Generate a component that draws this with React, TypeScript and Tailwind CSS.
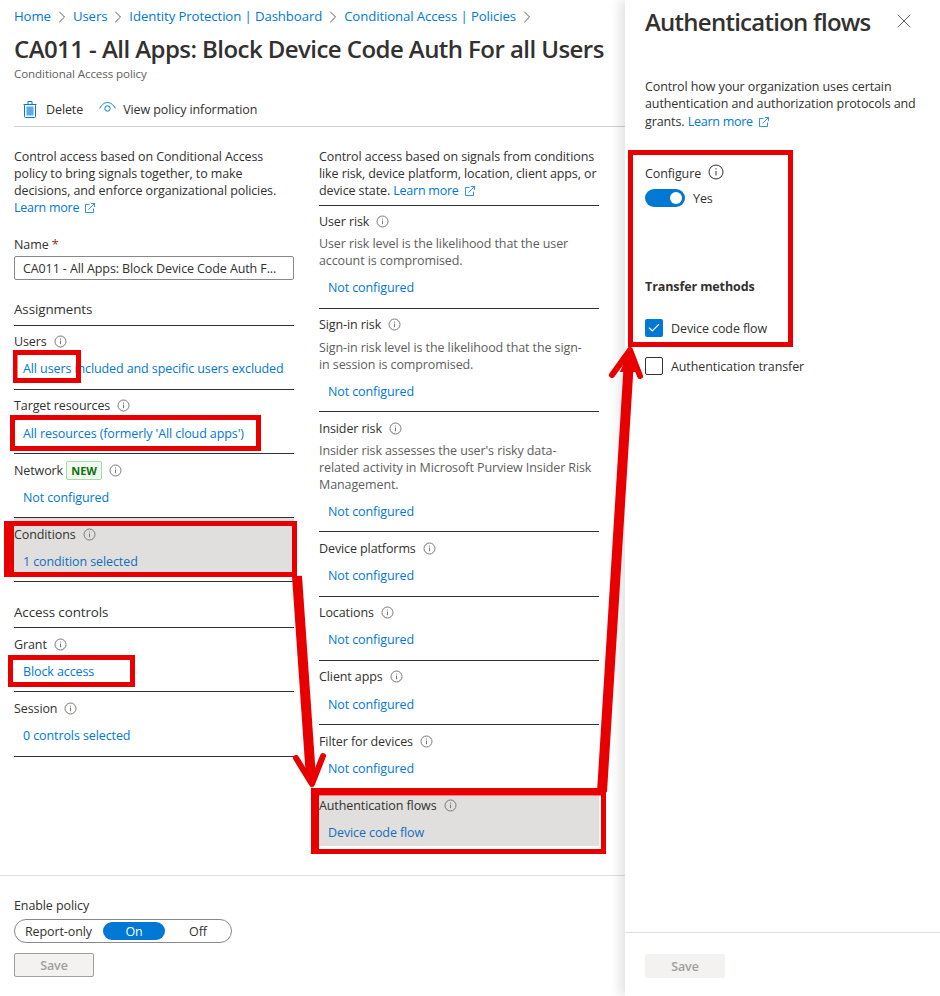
import { ChevronRight, X, Check } from "lucide-react";

type RowProps = {
  label: React.ReactNode;
  link: string;
  desc?: string[];
  className?: string;
  descMt?: string;
  linkMt?: string;
};

const InfoDot = () => (
  <svg width="13" height="13" viewBox="0 0 13 13" className="ml-[7px] shrink-0" fill="none">
    <circle cx="6.5" cy="6.5" r="5.5" stroke="#7a7875" />
    <path d="M6.5 5.6v3.6" stroke="#7a7875" />
    <path d="M6.5 3.6v1" stroke="#7a7875" />
  </svg>
);

const LinkOut = () => (
  <svg width="10" height="10" viewBox="0 0 10 10" className="ml-[6px] inline-block align-[-1px]" fill="none" stroke="#0078d4" strokeOpacity="0.8">
    <path d="M4.5 1.5H.5v8h8V5.5" />
    <path d="M3.5 6.5l6-6M6 .5h3.5V4" />
  </svg>
);

const Row = ({ label, link, desc, className, descMt, linkMt }: RowProps) => {
  return (
    <div className={`border-b border-[#323130] ${className ?? "h-[64px] pt-[7px]"}`}>
      <div className="flex items-center h-[17px] text-[#323130]">
        {label}
        <InfoDot />
      </div>
      {desc && (
        <div className={`${descMt ?? "mt-[5px]"} text-[#605e5c]`}>
          {desc.map((d) => (
            <p key={d} className="h-[17px] whitespace-nowrap">{d}</p>
          ))}
        </div>
      )}
      <p className={`${linkMt ?? "mt-[10px]"} h-[17px] pl-[9px] text-[#0078d4] whitespace-nowrap`}>{link}</p>
    </div>
  );
};

const Crumb = ({ text }: { text: string }) => (
  <>
    <span className="text-[#0078d4] whitespace-nowrap">{text}</span>
    <ChevronRight size={20} strokeWidth={1.2} color="#605e5c" className="mx-[1px]" />
  </>
);

const Callouts = () => (
  <svg width="940" height="996" viewBox="0 0 940 996" className="absolute left-0 top-0 pointer-events-none">
    <g fill="#e80000" fillRule="evenodd">
      <path d="M13 350h68v33H13zM17.5 355v23H76v-23z" />
      <path d="M10 415h251v36H10zM15 420v26h241v-26z" />
      <path d="M4 521h293v56H4zM14 526v46h278v-46z" />
      <path d="M8 655h127v32H8zM13 660v22h117v-22z" />
      <path d="M311 788h295v66H311zM319 795.5V849h282v-53.5z" />
      <path d="M628 150h165v197H628zM633 155v187h155V155z" />
    </g>
    <g fill="none" stroke="#e80000" strokeLinecap="round" strokeLinejoin="round">
      <path d="M297 576L311 778" strokeWidth="10" strokeLinecap="butt" />
      <path d="M296 758L312 784L323 756" strokeWidth="6" />
      <path d="M602 792L629 360" strokeWidth="10" strokeLinecap="butt" />
      <path d="M612 375L630 350L640 376" strokeWidth="6" />
    </g>
    <path d="M304 770L312 788L318 770z" fill="#e80000" />
    <path d="M620 372L630 347L638 372z" fill="#e80000" />
  </svg>
);

export default function App() {
  return (
    <div className="relative flex w-[940px] h-[996px] overflow-hidden bg-white text-[12.5px] leading-[17px] text-[#323130] font-['Open_Sans',sans-serif] tracking-[-0.1px]">
      <main className="flex flex-col w-[625px] shrink-0">
        <div className="pl-[14px] pt-[8px]">
          <nav className="flex items-center h-[17px] text-[13.2px]">
            <Crumb text="Home" />
            <Crumb text="Users" />
            <Crumb text="Identity Protection | Dashboard" />
            <Crumb text="Conditional Access | Policies" />
          </nav>
          <h1 className="mt-[7px] h-[34px] text-[24px] leading-[34px] font-semibold tracking-[-0.56px] whitespace-nowrap">
            CA011 - All Apps: Block Device Code Auth For all Users
          </h1>
          <p className="mt-[1px] text-[11.6px] leading-[14px] text-[#605e5c]">Conditional Access policy</p>
          <div className="flex items-center h-[44px] mt-[1px] pt-[10px] pl-[9px]">
            <svg width="14" height="17" viewBox="0 0 14 17" fill="none" stroke="#0078d4">
              <rect x="3.5" y="5.5" width="7" height="9" fill="#5ca9e5" stroke="none" />
              <path d="M.5 3.5h13M5 3V.5h4V3" />
              <rect x="1.5" y="3.5" width="11" height="13" rx="1" />
            </svg>
            <span className="ml-[9px]">Delete</span>
            <svg width="17" height="14" viewBox="0 0 17 14" className="ml-[16px] -mt-[3px]" fill="none" stroke="#0078d4">
              <path d="M.7 7.5C3 3 6 1.5 8.5 1.5S14 3 16.3 7.5" />
              <circle cx="8.5" cy="7.5" r="2.7" />
            </svg>
            <span className="ml-[7px]">View policy information</span>
          </div>
        </div>
        <div className="ml-[14px] border-t border-[#d2d0ce]" />

        <div className="flex flex-1 pl-[14px] pt-[21px] gap-[25px]">
          <section className="w-[280px]">
            <p className="whitespace-nowrap">Control access based on Conditional Access</p>
            <p className="whitespace-nowrap">policy to bring signals together, to make</p>
            <p className="whitespace-nowrap">decisions, and enforce organizational policies.</p>
            <p className="text-[#0078d4] tracking-[-0.25px]">Learn more<LinkOut /></p>

            <p className="mt-[20px]">
              Name <span className="text-[#a4262c]">*</span>
            </p>
            <div className="mt-[3px] h-[24px] border border-[#8a8886] rounded-[2px] pl-[8px] flex items-center whitespace-nowrap">
              CA011 - All Apps: Block Device Code Auth F...
            </div>

            <h2 className="mt-[21px] h-[24px] text-[13.4px] leading-[16px]">Assignments</h2>
            <div className="border-t border-[#323130]">
              <Row label="Users" link="All users included and specific users excluded" />
              <Row label="Target resources" link="All resources (formerly 'All cloud apps')" linkMt="mt-[11px]" />
              <Row
                label={
                  <>
                    Network
                    <span className="ml-[3px] h-[19px] w-[36px] justify-center border border-[#a8dba8] rounded-[2px] bg-[#f1faf1] text-[11px] font-bold text-[#0e700e] flex items-center tracking-normal">
                      NEW
                    </span>
                  </>
                }
                link="Not configured"
                className="h-[64px] pt-[8px]"
              />
              <div className="h-[64px] border-b border-[#323130]">
                <div className="h-[59px] bg-[#e1dfdd] pt-[8px]">
                  <div className="flex items-center h-[17px]">
                    Conditions
                    <InfoDot />
                  </div>
                  <p className="mt-[10px] pl-[9px] text-[#106ebe]">1 condition selected</p>
                </div>
              </div>
            </div>

            <h2 className="mt-[20px] h-[25px] text-[13.4px] leading-[20px]">Access controls</h2>
            <div className="border-t border-[#323130]">
              <Row label="Grant" link="Block access" className="h-[64px] pt-[8px]" />
              <Row label="Session" link="0 controls selected" className="h-[65px] pt-[8px]" />
            </div>
          </section>

          <section className="w-[280px]">
            <p className="whitespace-nowrap">Control access based on signals from conditions</p>
            <p className="whitespace-nowrap">like risk, device platform, location, client apps, or</p>
            <p className="whitespace-nowrap">device state. <span className="text-[#0078d4] tracking-[-0.25px]">Learn more<LinkOut /></span></p>
            <div className="mt-[6px] border-t border-[#323130]">
              <Row
                label="User risk"
                desc={["User risk level is the likelihood that the user", "account is compromised."]}
                link="Not configured"
                className="h-[103px] pt-[7px]"
              />
              <Row
                label="Sign-in risk"
                desc={["Sign-in risk level is the likelihood that the sign-", "in session is compromised."]}
                link="Not configured"
                className="h-[103px] pt-[7px]"
                descMt="mt-[6px]"
              />
              <Row
                label="Insider risk"
                desc={[
                  "Insider risk assesses the user's risky data-",
                  "related activity in Microsoft Purview Insider Risk",
                  "Management.",
                ]}
                link="Not configured"
                className="h-[120px] pt-[8px]"
              />
              <Row label="Device platforms" link="Not configured" className="h-[65px] pt-[8px]" />
              <Row label="Locations" link="Not configured" />
              <Row label="Client apps" link="Not configured" linkMt="mt-[11px]" />
              <Row label="Filter for devices" link="Not configured" className="h-[65px] pt-[8px]" />
              <div className="mt-[6px] h-[50px] bg-[#e1dfdd] pt-[1px]">
                <div className="flex items-center h-[17px]">
                  Authentication flows
                  <InfoDot />
                </div>
                <p className="mt-[10px] pl-[9px] text-[#106ebe]">Device code flow</p>
              </div>
            </div>
          </section>
        </div>

        <footer className="h-[121px] border-t border-[#e1dfdd] pl-[14px] pt-[21px]">
          <p>Enable policy</p>
          <div className="mt-[5px] flex items-center w-[218px] h-[24px] border border-[#8a8886] rounded-full pl-[10px]">
            <span className="w-[78px] whitespace-nowrap">Report-only</span>
            <span className="w-[62px] h-[18px] rounded-full bg-[#0078d4] text-white flex items-center justify-center">On</span>
            <span className="w-[66px] text-center">Off</span>
          </div>
          <button className="mt-[10px] flex items-center justify-center w-[80px] h-[24px] bg-[#f3f2f1] border border-[#a19f9d] rounded-[2px] font-semibold text-[#a19f9d]">
            Save
          </button>
        </footer>
      </main>

      <aside className="flex flex-col flex-1 bg-white shadow-[-6px_0_10px_rgba(0,0,0,0.10)]">
        <div className="flex-1 pl-[20px]">
          <div className="flex items-center justify-between h-[42px] pr-[24px]">
            <h2 className="text-[24px] font-semibold tracking-[-0.75px] whitespace-nowrap">Authentication flows</h2>
            <X size={24} strokeWidth={1} color="#605e5c" />
          </div>
          <p className="mt-[36px] whitespace-nowrap">Control how your organization uses certain</p>
          <p className="whitespace-nowrap">authentication and authorization protocols and</p>
          <p className="mt-[1px] whitespace-nowrap">grants. <span className="text-[#0078d4] tracking-[-0.25px]">Learn more<LinkOut /></span></p>

          <div className="mt-[35px] flex items-center h-[17px]">
            Configure
            <svg width="16" height="16" viewBox="0 0 16 16" className="ml-[7px] -mt-[4px]" fill="none" stroke="#323130">
              <circle cx="8" cy="8" r="7" />
              <path d="M8 7v4.5M8 4.2v1.2" />
            </svg>
          </div>
          <div className="mt-[7px] flex items-center">
            <div className="flex items-center justify-end w-[40px] h-[18px] rounded-full bg-[#0078d4] pr-[3px]">
              <div className="w-[12px] h-[12px] rounded-full bg-white" />
            </div>
            <span className="ml-[8px]">Yes</span>
          </div>
          <p className="mt-[71px] font-bold">Transfer methods</p>
          <div className="mt-[24px] flex items-center h-[18px]">
            <div className="flex items-center justify-center w-[18px] h-[18px] rounded-[2px] bg-[#0078d4]">
              <Check size={14} strokeWidth={2} color="white" />
            </div>
            <span className="ml-[8px]">Device code flow</span>
          </div>
          <div className="mt-[20px] flex items-center h-[18px]">
            <div className="w-[18px] h-[18px] rounded-[2px] border border-[#323130]" />
            <span className="ml-[8px]">Authentication transfer</span>
          </div>
        </div>
        <div className="h-[64px] border-t border-[#e1dfdd] pl-[20px] pt-[21px]">
          <button className="flex items-center justify-center w-[80px] h-[24px] bg-[#f3f2f1] rounded-[2px] font-semibold text-[#a19f9d]">
            Save
          </button>
        </div>
      </aside>

      <Callouts />
    </div>
  );
}
